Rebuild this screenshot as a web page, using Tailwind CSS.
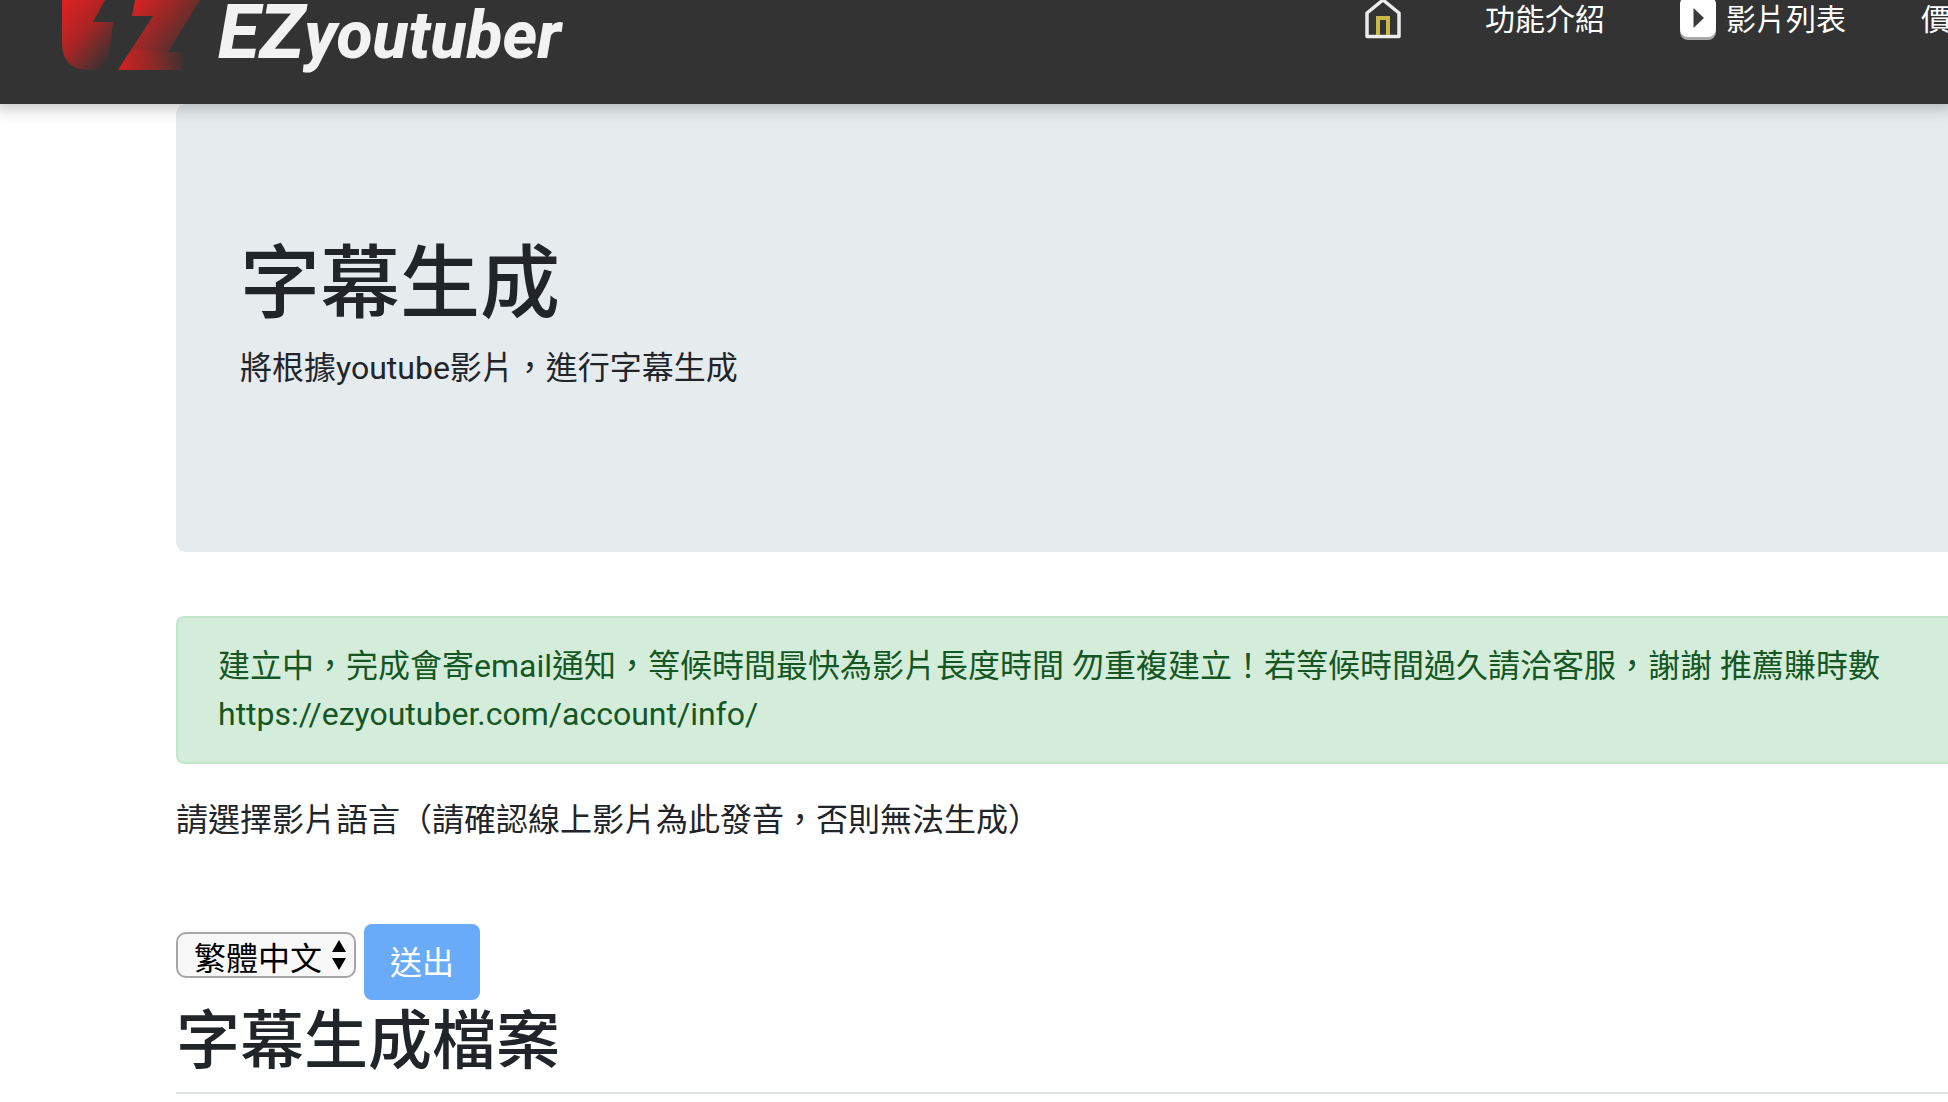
<!DOCTYPE html>
<html lang="zh-Hant">
<head>
<meta charset="utf-8">
<meta name="viewport" content="width=device-width, initial-scale=1">
<title>字幕生成 - EZyoutuber</title>
<script src="https://cdn.jsdelivr.net/npm/@tailwindcss/browser@4"></script>
</head>
<body class="overflow-x-hidden bg-white font-['Roboto','Noto_Sans_CJK_TC',sans-serif] text-[32px] leading-[48px] text-[#212529]">
<header class="relative z-10 flex h-26 items-start overflow-x-clip bg-[#333] pl-[62px] text-white shadow-[0_0_14px_5px_rgba(0,0,0,0.22)]">
  <a href="#" class="flex h-[70px] shrink-0 items-start gap-[18px]" aria-label="EZyoutuber">
    <svg class="h-[70px] w-[138px]" viewBox="0 0 138 70" aria-hidden="true">
      <defs>
        <linearGradient id="e" gradientUnits="userSpaceOnUse" x1="0" y1="5" x2="56" y2="52">
          <stop offset="0" stop-color="#dc2222"/><stop offset=".45" stop-color="#ad2424"/><stop offset="1" stop-color="#333"/>
        </linearGradient>
        <linearGradient id="z" gradientUnits="userSpaceOnUse" x1="66" y1="12" x2="126" y2="56">
          <stop offset="0" stop-color="#d62222"/><stop offset=".5" stop-color="#8a2a28"/><stop offset="1" stop-color="#333"/>
        </linearGradient>
        <linearGradient id="zb" gradientUnits="userSpaceOnUse" x1="60" y1="66" x2="124" y2="54">
          <stop offset="0" stop-color="#cc2222"/><stop offset=".5" stop-color="#8a2a28"/><stop offset="1" stop-color="#333"/>
        </linearGradient>
      </defs>
      <path fill="url(#e)" d="M0 0H43L31 22H51L46 70H28C8 70 0 60 0 42Z"/>
      <path fill="url(#z)" d="M73 0H138L106 52L56 70L91 16H70Z"/>
      <path fill="url(#zb)" d="M56 70L70 48.400L106 52H126L120 70Z"/>
    </svg>
    <span class="text-[66px] leading-16 font-extrabold text-[#f2f2f2] italic"><span class="text-[76px]">EZ</span>youtuber</span>
  </a>
  <nav class="ml-auto flex shrink-0 items-start text-[30px] leading-10">
    <a href="#" class="mr-[84px]" aria-label="首頁">
      <svg class="h-10 w-9" viewBox="0 0 36 40" fill="none" aria-hidden="true">
        <path d="M2 36.500V13L18 0L34 13V36.500Z" stroke="#ececec" stroke-width="3.500" stroke-linejoin="round"/>
        <path d="M13 36V18H23V36" stroke="#c8b848" stroke-width="4"/>
        <path d="M2 36.500H34" stroke="#ececec" stroke-width="3"/>
      </svg>
    </a>
    <a href="#" class="mr-[75px]">功能介紹</a>
    <a href="#" class="mr-[75px] flex gap-[10px]">
      <svg class="h-10 w-9" viewBox="0 0 36 40" aria-hidden="true">
        <rect y="-2" width="36" height="42" rx="8" fill="#aaa"/>
        <rect y="-4" width="36" height="41" rx="8" fill="#fff"/>
        <path d="M13.500 8L24 18L13.500 28Z" fill="#3a3a3a"/>
      </svg>
      影片列表
    </a>
    <a href="#" class="w-[27px]">價</a>
  </nav>
</header>
<main class="pl-44">
  <section class="mb-16 rounded-l-[10px] bg-[#e6ebee] px-16 py-32">
    <h1 class="mb-2 text-[80px] leading-26 font-medium">字幕生成</h1>
    <p class="mb-8">將根據youtube影片，進行字幕生成</p>
  </section>
  <div role="alert" class="mb-8 rounded-l-lg border-2 border-r-0 border-[#c3e6cb] bg-[#d4edda] py-6 pl-10 text-[#155724]">
    建立中，完成會寄email通知，等候時間最快為影片長度時間 勿重複建立！若等候時間過久請洽客服，謝謝 推薦賺時數
    <span class="block">https://ezyoutuber.com/account/info/</span>
  </div>
  <form>
    <label for="lang" class="mb-20 block">請選擇影片語言（請確認線上影片為此發音，否則無法生成）</label>
    <div class="flex items-start gap-2">
      <div class="relative mt-2">
        <select id="lang" class="h-[46px] w-[180px] appearance-none rounded-[10px] border-2 border-[#a6a6a6] bg-[#f8f8f8] pt-1 pl-4 leading-[42px] text-black">
          <option>繁體中文</option>
        </select>
        <svg class="pointer-events-none absolute top-2 right-[10px] h-[30px] w-[14px]" viewBox="0 0 14 30" aria-hidden="true">
          <path d="M7 0L14 12H0ZM7 30L14 18H0Z"/>
        </svg>
      </div>
      <button type="submit" class="h-19 w-29 rounded-lg bg-[#69abf9] pt-0.5 text-white">送出</button>
    </div>
  </form>
  <h2 class="border-b-2 border-[#dee2e6] pb-2 text-[64px] leading-[84px] font-medium">字幕生成檔案</h2>
</main>
</body>
</html>
